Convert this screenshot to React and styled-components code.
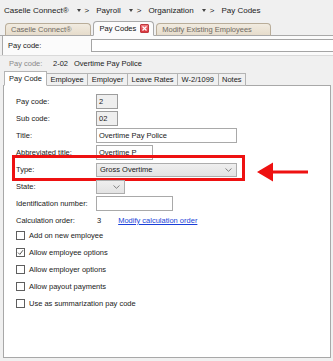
import React from "react";
import styled, { createGlobalStyle } from "styled-components";

const Global = createGlobalStyle`
  html, body { margin: 0; padding: 0; background: #f0f0f0; }
  body { font-family: "Liberation Sans", Arial, sans-serif; font-size: 7.5px; color: #1a1a1a; }
`;

const Screen = styled.div`
  width: 333px;
  height: 361px;
  display: flex;
  flex-direction: column;
  background: #f0f0f0;
  overflow: hidden;
`;

const Breadcrumb = styled.div`
  height: 20px;
  display: flex;
  align-items: center;
  padding-left: 4px;
  font-size: 8px;
  color: #1b1b1b;
`;

const Crumb = styled.span`
  display: flex;
  align-items: center;
`;

const Caret = styled.svg`
  margin: 0 4px 0 8px;
`;

const Sep = styled.span`
  margin-right: 7px;
`;

const TabStrip = styled.div`
  height: 15px;
  display: flex;
  align-items: flex-end;
  padding-left: 5px;
  gap: 2px;
  border-bottom: 1px solid #a9a9a9;
`;

const DocTab = styled.div`
  height: ${(p) => (p.$active ? 15 : 13)}px;
  display: flex;
  align-items: center;
  gap: 4px;
  padding: ${(p) => (p.$active ? "0 4px 0 6px" : "0 18px 0 5px")};
  margin-bottom: -1px;
  box-sizing: border-box;
  border: 1px solid ${(p) => (p.$active ? "#a9a9a9" : "#b9ad99")};
  border-bottom: ${(p) => (p.$active ? "1px solid #fbfbfb" : "1px solid #a9a9a9")};
  border-radius: 4px 4px 0 0;
  background: ${(p) => (p.$active ? "#fbfbfb" : "linear-gradient(#f1ebe0, #e6dccb)")};
  color: ${(p) => (p.$active ? "#111" : "#6f6a63")};
  font-size: 7.5px;
  white-space: nowrap;
`;

const CloseBox = styled.span`
  width: 9px;
  height: 9px;
  border-radius: 1px;
  background: linear-gradient(#f07a7f, #d8323a);
  border: 1px solid #c0383e;
  box-sizing: border-box;
  display: flex;
  align-items: center;
  justify-content: center;
`;

const SearchRow = styled.div`
  height: 19px;
  display: flex;
  align-items: center;
  background: #fbfbfb;
  border-left: 1px solid #a9a9a9;
  margin-left: 2px;
  padding-left: 5px;
`;

const SearchLabel = styled.span`
  width: 83px;
  flex: none;
`;

const SearchInput = styled.div`
  flex: 1;
  height: 13px;
  box-sizing: border-box;
  background: #fff;
  border: 1px solid #a5a5a5;
  border-right: none;
`;

const InfoRow = styled.div`
  height: 14px;
  display: flex;
  align-items: center;
  padding-left: 9px;
  border-top: 1px solid #dadada;
`;

const InfoLabel = styled.span`
  color: #8a8a8a;
  width: 44px;
`;

const InfoCode = styled.span`
  width: 21px;
`;

const PageTabs = styled.div`
  height: 15px;
  display: flex;
  align-items: flex-end;
  padding-left: 4px;
`;

const PageTab = styled.div`
  height: ${(p) => (p.$active ? 15 : 13)}px;
  box-sizing: border-box;
  display: flex;
  align-items: center;
  padding: 0 ${(p) => (p.$active ? 4 : 3.5)}px;
  margin-bottom: -1px;
  border: 1px solid #b4b4b4;
  border-left: ${(p) => (p.$first || p.$active ? "1px solid #b4b4b4" : "none")};
  border-bottom: ${(p) => (p.$active ? "1px solid #fff" : "1px solid #b4b4b4")};
  background: ${(p) => (p.$active ? "#fff" : "#f0f0f0")};
  position: relative;
  z-index: ${(p) => (p.$active ? 2 : 1)};
  white-space: nowrap;
`;

const Panel = styled.div`
  flex: 1;
  margin: 0 2px 3px 3px;
  background: #fff;
  border: 1px solid #a8a8a8;
  padding: 7px 12px 0 12px;
  display: flex;
  flex-direction: column;
`;

const FieldRow = styled.div`
  height: 17px;
  display: grid;
  grid-template-columns: 80px auto auto;
  align-items: center;
  justify-content: start;
  position: relative;
`;

const Label = styled.span`
  white-space: nowrap;
`;

const TextBox = styled.div`
  width: ${(p) => p.$w}px;
  height: 15px;
  box-sizing: border-box;
  border: 1px solid ${(p) => (p.$disabled ? "#9d9d9d" : "#a9a9a9")};
  background: ${(p) => (p.$disabled ? "#efefef" : "#fff")};
  display: flex;
  align-items: center;
  padding-left: 2px;
`;

const Select = styled.div`
  width: ${(p) => p.$w}px;
  height: 14px;
  box-sizing: border-box;
  border: 1px solid #adadad;
  background: linear-gradient(#efefef, #e3e3e3);
  display: flex;
  align-items: center;
  justify-content: space-between;
  padding: 0 4px 0 3px;
`;

const Value = styled.span`
  padding-left: 1px;
`;

const Link = styled.a`
  color: #1a3fd8;
  text-decoration: underline;
  margin-left: 17px;
`;

const Highlight = styled.div`
  position: absolute;
  left: -4px;
  top: -6px;
  width: 233px;
  height: 26px;
  box-sizing: border-box;
  border: 3px solid #ee1111;
  pointer-events: none;
`;

const Arrow = styled.svg`
  position: absolute;
  left: 241px;
  top: 1px;
`;

const Checks = styled.div`
  margin-top: -2px;
  display: flex;
  flex-direction: column;
`;

const CheckRow = styled.label`
  height: 17px;
  display: flex;
  align-items: center;
  gap: 4px;
`;

const Box = styled.span`
  width: 9px;
  height: 9px;
  box-sizing: border-box;
  border: 1px solid #5e5e5e;
  background: #fff;
  display: flex;
  align-items: center;
  justify-content: center;
`;

const Chevron = ({ color = "#777" }) => (
  <svg width="7" height="4" viewBox="0 0 7 4">
    <path d="M0.5 0.5 L3.5 3.3 L6.5 0.5" fill="none" stroke={color} strokeWidth="0.9" />
  </svg>
);

const DownTri = () => (
  <Caret width="4" height="3" viewBox="0 0 4 3">
    <path d="M0 0 H4 L2 3 Z" fill="#444" />
  </Caret>
);

const crumbs = ["Caselle Connect®", "Payroll", "Organization"];
const pageTabs = ["Pay Code", "Employee", "Employer", "Leave Rates", "W-2/1099", "Notes"];
const checks = [
  ["Add on new employee", false],
  ["Allow employee options", true],
  ["Allow employer options", false],
  ["Allow payout payments", false],
  ["Use as summarization pay code", false],
];

export default function App() {
  return (
    <>
      <Global />
      <Screen>
        <Breadcrumb>
          {crumbs.map((c) => (
            <Crumb key={c}>
              {c}
              <DownTri />
              <Sep>&gt;</Sep>
            </Crumb>
          ))}
          <Crumb>Pay Codes</Crumb>
        </Breadcrumb>

        <TabStrip>
          <DocTab>Caselle Connect®</DocTab>
          <DocTab $active>
            Pay Codes
            <CloseBox>
              <svg width="5" height="5" viewBox="0 0 5 5">
                <path d="M0.5 0.5 L4.5 4.5 M4.5 0.5 L0.5 4.5" stroke="#fff" strokeWidth="1.2" />
              </svg>
            </CloseBox>
          </DocTab>
          <DocTab>Modify Existing Employees</DocTab>
        </TabStrip>

        <SearchRow>
          <SearchLabel>Pay code:</SearchLabel>
          <SearchInput />
        </SearchRow>

        <InfoRow>
          <InfoLabel>Pay code:</InfoLabel>
          <InfoCode>2-02</InfoCode>
          <span>Overtime Pay Police</span>
        </InfoRow>

        <PageTabs>
          {pageTabs.map((t, i) => (
            <PageTab key={t} $active={i === 0} $first={i === 0}>
              {t}
            </PageTab>
          ))}
        </PageTabs>

        <Panel>
          <FieldRow>
            <Label>Pay code:</Label>
            <TextBox $w={22} $disabled>2</TextBox>
          </FieldRow>
          <FieldRow>
            <Label>Sub code:</Label>
            <TextBox $w={22} $disabled>02</TextBox>
          </FieldRow>
          <FieldRow>
            <Label>Title:</Label>
            <TextBox $w={141}>Overtime Pay Police</TextBox>
          </FieldRow>
          <FieldRow>
            <Label>Abbreviated title:</Label>
            <TextBox $w={57}>Overtime P</TextBox>
          </FieldRow>
          <FieldRow>
            <Label>Type:</Label>
            <Select $w={141}>
              Gross Overtime
              <Chevron />
            </Select>
            <Highlight />
            <Arrow width="52" height="20" viewBox="0 0 52 20">
              <path d="M0 10 L16 0.5 L16 8.5 L51 8.5 L51 11.5 L16 11.5 L16 19.5 Z" fill="#ee1111" />
            </Arrow>
          </FieldRow>
          <FieldRow>
            <Label>State:</Label>
            <Select $w={29}>
              <span />
              <Chevron />
            </Select>
          </FieldRow>
          <FieldRow>
            <Label>Identification number:</Label>
            <TextBox $w={77} />
          </FieldRow>
          <FieldRow>
            <Label>Calculation order:</Label>
            <Value>
              3<Link href="#">Modify calculation order</Link>
            </Value>
          </FieldRow>

          <Checks>
            {checks.map(([t, on]) => (
              <CheckRow key={t}>
                <Box>
                  {on && (
                    <svg width="7" height="7" viewBox="0 0 7 7">
                      <path d="M1 3.6 L2.8 5.4 L6 1.2" fill="none" stroke="#555" strokeWidth="1" />
                    </svg>
                  )}
                </Box>
                {t}
              </CheckRow>
            ))}
          </Checks>
        </Panel>
      </Screen>
    </>
  );
}
